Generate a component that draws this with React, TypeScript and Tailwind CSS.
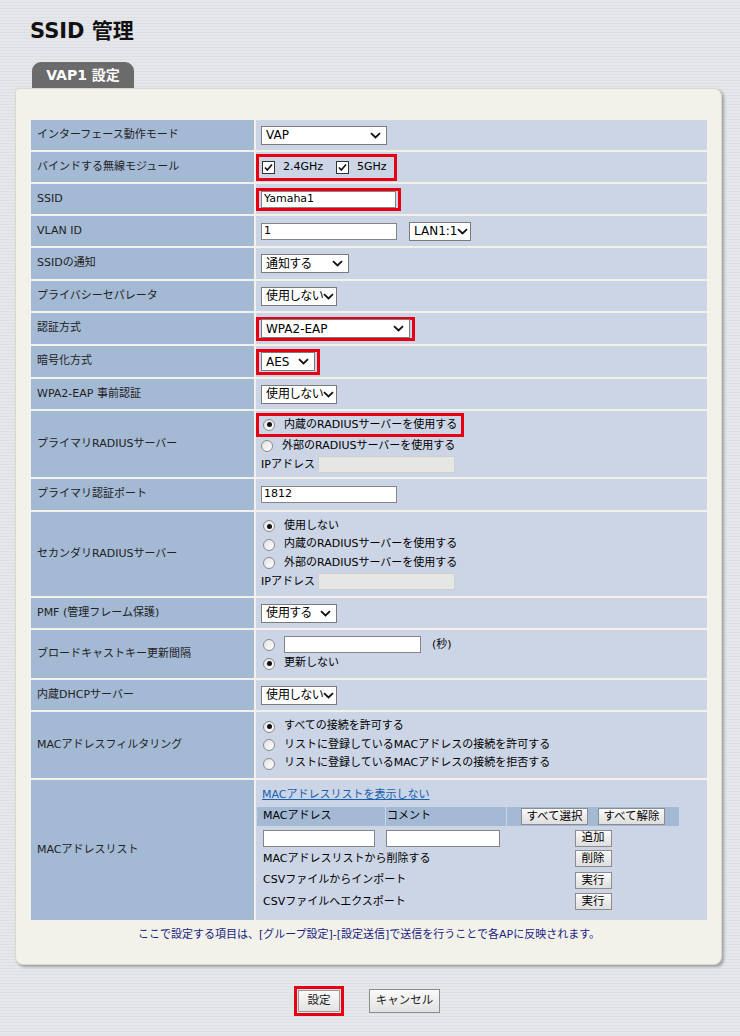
import React from "react";

const Chevron = () => (
  <svg width="11" height="7" viewBox="0 0 11 7" className="shrink-0">
    <path d="M1 1.2l4.5 4.3L10 1.2" fill="none" stroke="#111" strokeWidth="1.8" />
  </svg>
);

const Select = ({ value, w }: { value: string; w: string }) => (
  <div className={`${w} h-[19px] flex items-center justify-between whitespace-nowrap overflow-hidden border border-[#7a7a7a] bg-white pl-[4px] pr-[5px] text-[12px] text-black`}>
    <span className="leading-none [font-feature-settings:'palt']">{value}</span>
    <Chevron />
  </div>
);

const Input = ({ w, value = "", disabled = false }: { w: string; value?: string; disabled?: boolean }) => (
  <div
    className={`${w} h-[17px] shrink-0 flex items-center border px-[2px] text-[11px] text-black ${
      disabled ? "border-[#cfcfcf] bg-[#e6e6e4]" : "border-[#858585] bg-white"
    }`}
  >
    {value}
  </div>
);

const Radio = ({ checked = false }: { checked?: boolean }) => (
  <span className="w-[12px] h-[12px] shrink-0 rounded-full border border-[#8a8a8a] bg-gradient-to-br from-[#e2e2e2] to-white flex items-center justify-center">
    {checked && <span className="w-[5px] h-[5px] rounded-full bg-[#111]" />}
  </span>
);

const Check = () => (
  <svg width="13" height="13" viewBox="0 0 13 13" className="shrink-0">
    <rect x="0.5" y="0.5" width="12" height="12" fill="#fff" stroke="#333" />
    <path d="M3 6.5l2.3 2.5L10 3.5" fill="none" stroke="#111" strokeWidth="1.6" />
  </svg>
);

const RadioLine = ({ checked, label }: { checked?: boolean; label: string }) => (
  <div className="flex items-center gap-[9px] h-[18.5px] whitespace-nowrap">
    <Radio checked={checked} />
    <span>{label}</span>
  </div>
);

const Red = ({ children, cls = "" }: { children: React.ReactNode; cls?: string }) => (
  <div className={`-ml-[5px] inline-flex items-center border-[3px] border-[#e60012] px-[2px] ${cls}`}>{children}</div>
);

const Btn = ({ label, w }: { label: string; w: string }) => (
  <div className={`${w} h-[17px] flex items-center justify-center whitespace-nowrap border border-[#8c8c8c] bg-gradient-to-b from-[#fafafa] to-[#dedede] text-[11.5px] text-black leading-none`}>
    {label}
  </div>
);

const IpRow = () => (
  <div className="flex items-center h-[19px] whitespace-nowrap">
    <span className="w-[57px]">IPアドレス</span>
    <Input w="w-[137px]" disabled />
  </div>
);

type Row = { label: string; h: string; content: React.ReactNode };

const rows: Row[] = [
  { label: "インターフェース動作モード", h: "h-[30px]", content: <Select value="VAP" w="w-[126px]" /> },
  {
    label: "バインドする無線モジュール",
    h: "h-[30px]",
    content: (
      <Red cls="h-[27px] pl-[3px] pr-[7px]">
        <Check />
        <span className="ml-[8px]">2.4GHz</span>
        <span className="ml-[13px]">
          <Check />
        </span>
        <span className="ml-[8px]">5GHz</span>
      </Red>
    ),
  },
  {
    label: "SSID",
    h: "h-[30px]",
    content: (
      <Red cls="h-[23px]">
        <Input w="w-[135px]" value="Yamaha1" />
      </Red>
    ),
  },
  {
    label: "VLAN ID",
    h: "h-[30px]",
    content: (
      <div className="flex items-center gap-[12px]">
        <Input w="w-[136px]" value="1" />
        <Select value="LAN1:1" w="w-[62px]" />
      </div>
    ),
  },
  { label: "SSIDの通知", h: "h-[31px]", content: <Select value="通知する" w="w-[88px]" /> },
  { label: "プライバシーセパレータ", h: "h-[30px]", content: <Select value="使用しない" w="w-[76px]" /> },
  {
    label: "認証方式",
    h: "h-[31px]",
    content: (
      <Red cls="h-[24px]">
        <Select value="WPA2-EAP" w="w-[149px]" />
      </Red>
    ),
  },
  {
    label: "暗号化方式",
    h: "h-[31px]",
    content: (
      <Red cls="h-[26px]">
        <Select value="AES" w="w-[54px]" />
      </Red>
    ),
  },
  { label: "WPA2-EAP 事前認証", h: "h-[30px]", content: <Select value="使用しない" w="w-[76px]" /> },
  {
    label: "プライマリRADIUSサーバー",
    h: "h-[66px]",
    content: (
      <div className="flex flex-col">
        <Red cls="h-[24px] -mt-[1px] pl-[4px] pr-[4px]">
          <div className="flex items-center gap-[9px] whitespace-nowrap">
            <Radio checked />
            <span>内蔵のRADIUSサーバーを使用する</span>
          </div>
        </Red>
        <RadioLine label="外部のRADIUSサーバーを使用する" />
        <IpRow />
      </div>
    ),
  },
  { label: "プライマリ認証ポート", h: "h-[31px]", content: <Input w="w-[136px]" value="1812" /> },
  {
    label: "セカンダリRADIUSサーバー",
    h: "h-[84px]",
    content: (
      <div className="flex flex-col pl-[2px]">
        <RadioLine checked label="使用しない" />
        <RadioLine label="内蔵のRADIUSサーバーを使用する" />
        <RadioLine label="外部のRADIUSサーバーを使用する" />
        <div className="-ml-[2px]">
          <IpRow />
        </div>
      </div>
    ),
  },
  { label: "PMF (管理フレーム保護)", h: "h-[30px]", content: <Select value="使用する" w="w-[76px]" /> },
  {
    label: "ブロードキャストキー更新間隔",
    h: "h-[48px]",
    content: (
      <div className="flex flex-col pl-[2px]">
        <div className="flex items-center gap-[9px] h-[19px] whitespace-nowrap">
          <Radio />
          <Input w="w-[137px]" />
          <span className="ml-[2px]">(秒)</span>
        </div>
        <RadioLine checked label="更新しない" />
      </div>
    ),
  },
  { label: "内蔵DHCPサーバー", h: "h-[30px]", content: <Select value="使用しない" w="w-[76px]" /> },
  {
    label: "MACアドレスフィルタリング",
    h: "h-[66px]",
    content: (
      <div className="flex flex-col pl-[2px]">
        <RadioLine checked label="すべての接続を許可する" />
        <RadioLine label="リストに登録しているMACアドレスの接続を許可する" />
        <RadioLine label="リストに登録しているMACアドレスの接続を拒否する" />
      </div>
    ),
  },
];

const MacList = () => (
  <div className="flex flex-col pt-[7px]">
    <a className="ml-[6px] h-[20px] text-[#1660b0] underline decoration-[#1660b0]">MACアドレスリストを表示しない</a>
    <div className="grid grid-cols-[128px_120px_172px] gap-x-[1px] ml-[1px]">
      <div className="h-[19px] bg-[#a4b9d4] pl-[6px] flex items-center">MACアドレス</div>
      <div className="h-[19px] bg-[#a4b9d4] pl-[1px] flex items-center">コメント</div>
      <div className="h-[19px] bg-[#a4b9d4] flex items-center justify-center gap-[10px]">
        <Btn label="すべて選択" w="w-[67px]" />
        <Btn label="すべて解除" w="w-[67px]" />
      </div>
    </div>
    <div className="grid grid-cols-[128px_120px_172px] gap-x-[1px] ml-[1px]">
      <div className="h-[21px] flex items-center pl-[6px] pt-[3px]">
        <Input w="w-[112px]" />
      </div>
      <div className="h-[21px] flex items-center pt-[3px]">
        <Input w="w-[114px]" />
      </div>
      <div className="h-[21px] flex items-center justify-center pt-[3px]">
        <Btn label="追加" w="w-[37px]" />
      </div>
      {["MACアドレスリストから削除する", "CSVファイルからインポート", "CSVファイルへエクスポート"].map((t, i) => (
        <React.Fragment key={t}>
          <div className="col-span-2 h-[21.5px] flex items-center pl-[6px] pt-[2px]">{t}</div>
          <div className="h-[21.5px] flex items-center justify-center pt-[2px]">
            <Btn label={i === 0 ? "削除" : "実行"} w="w-[37px]" />
          </div>
        </React.Fragment>
      ))}
    </div>
  </div>
);

export default function App() {
  return (
    <div className="w-[740px] min-h-[1036px] bg-[repeating-linear-gradient(180deg,#e5e7eb_0px,#e5e7eb_2px,#dcdfe4_2px,#dcdfe4_3px)] font-['DejaVu_Sans','Noto_Sans_CJK_JP',sans-serif] text-[11px] text-[#1a1a1a]">
      <h1 className="pl-[30px] pt-[17px] h-[44px] text-[21px] font-bold leading-[28px] text-[#111]">SSID 管理</h1>
      <div className="mt-[18px] ml-[32px] w-[102px] h-[26px] rounded-t-[9px] bg-[#6b6b6b] flex items-center justify-center text-[14px] font-bold text-white">
        VAP1 設定
      </div>
      <div className="ml-[15px] w-[707px] rounded-[8px] rounded-tl-[4px] border border-[#d9d9d0] bg-[#f2f2eb] shadow-[2px_2px_3px_rgba(0,0,0,0.3)] pt-[31px] pl-[15px] pr-[14px] pb-[20px]">
        <div className="flex flex-col gap-[2px]">
          {rows.map((r) => (
            <div key={r.label} className={`flex gap-[2px] ${r.h}`}>
              <div className="w-[223px] shrink-0 bg-[#a4b9d4] flex items-center pl-[6px] text-[#222]">{r.label}</div>
              <div className="flex-1 bg-[#ccd5e6] flex items-center pl-[5px] text-black">{r.content}</div>
            </div>
          ))}
          <div className="flex gap-[2px] h-[140px]">
            <div className="w-[223px] shrink-0 bg-[#a4b9d4] flex items-center pl-[6px] text-[#222]">MACアドレスリスト</div>
            <div className="flex-1 bg-[#ccd5e6] text-black">
              <MacList />
            </div>
          </div>
        </div>
        <p className="mt-[7px] text-center text-[11px] text-[#1a237e]">
          ここで設定する項目は、[グループ設定]-[設定送信]で送信を行うことで各APに反映されます。
        </p>
      </div>
      <div className="mt-[21px] flex justify-center items-center gap-[25px] pr-[6px]">
        <div className="border-[3px] border-[#e60012] p-[1px]">
          <div className="w-[42px] h-[22px] flex items-center justify-center border border-[#999] bg-gradient-to-b from-[#fafafa] to-[#e2e2e2] text-[11.5px]">
            設定
          </div>
        </div>
        <div className="w-[71px] h-[24px] flex items-center justify-center border border-[#8c8c8c] bg-gradient-to-b from-[#fafafa] to-[#e2e2e2] text-[11.5px]">
          キャンセル
        </div>
      </div>
    </div>
  );
}
